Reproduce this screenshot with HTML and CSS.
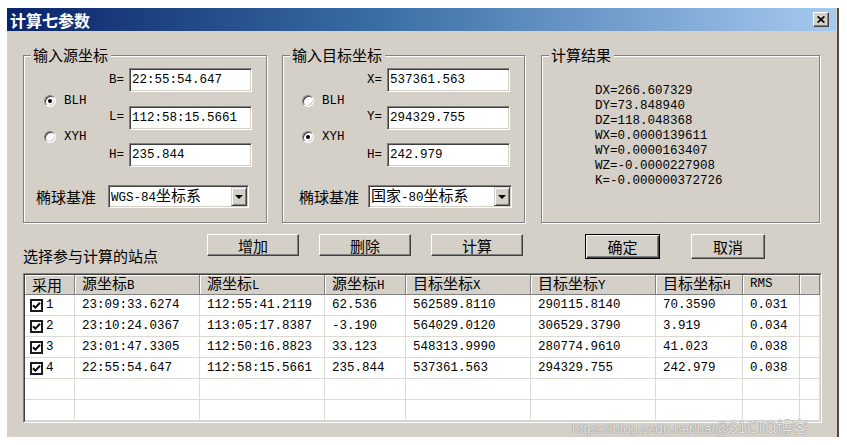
FILE: index.html
```html
<!DOCTYPE html>
<html lang="zh-CN">
<head>
<meta charset="utf-8">
<title>计算七参数</title>
<link rel="stylesheet" href="styles.css">
</head>
<body>
<div class="win">
  <div class="titlebar">
    <span class="title">计算七参数</span>
    <span class="close"><svg width="8" height="7" viewBox="0 0 8 7"><path d="M0.6 0.4 L7.4 6.6 M7.4 0.4 L0.6 6.6" stroke="#000" stroke-width="1.7" fill="none"/></svg></span>
  </div>
  <div class="body">
    <div class="groups">
      <div class="group g1">
        <span class="legend">输入源坐标</span>
        <div class="coord">
          <div class="radios">
            <div class="radio"><span class="dot on"></span><span class="m">BLH</span></div>
            <div class="radio"><span class="dot"></span><span class="m">XYH</span></div>
          </div>
          <div class="fields">
            <div class="field"><span class="m lbl">B=</span><span class="input m">22:55:54.647</span></div>
            <div class="field"><span class="m lbl">L=</span><span class="input m">112:58:15.5661</span></div>
            <div class="field"><span class="m lbl">H=</span><span class="input m">235.844</span></div>
          </div>
        </div>
        <div class="ellip">
          <span class="elabel">椭球基准</span>
          <div class="combo"><span class="cval"><span class="m">WGS-84</span>坐标系</span><span class="arrow"><span class="tri"></span></span></div>
        </div>
      </div>
      <div class="group g2">
        <span class="legend">输入目标坐标</span>
        <div class="coord">
          <div class="radios">
            <div class="radio"><span class="dot"></span><span class="m">BLH</span></div>
            <div class="radio"><span class="dot on"></span><span class="m">XYH</span></div>
          </div>
          <div class="fields">
            <div class="field"><span class="m lbl">X=</span><span class="input m">537361.563</span></div>
            <div class="field"><span class="m lbl">Y=</span><span class="input m">294329.755</span></div>
            <div class="field"><span class="m lbl">H=</span><span class="input m">242.979</span></div>
          </div>
        </div>
        <div class="ellip">
          <span class="elabel">椭球基准</span>
          <div class="combo"><span class="cval">国家<span class="m">-80</span>坐标系</span><span class="arrow"><span class="tri"></span></span></div>
        </div>
      </div>
      <div class="group g3">
        <span class="legend">计算结果</span>
        <div class="result m">DX=266.607329
DY=73.848940
DZ=118.048368
WX=0.0000139611
WY=0.0000163407
WZ=-0.0000227908
K=-0.000000372726</div>
      </div>
    </div>

    <div class="actions">
      <span class="sel-label">选择参与计算的站点</span>
      <span class="btn b-add">增加</span>
      <span class="btn b-del">删除</span>
      <span class="btn b-calc">计算</span>
      <span class="btn big default b-ok">确定</span>
      <span class="btn big b-cancel">取消</span>
    </div>

    <div class="table">
      <div class="grid">
        <div class="th"><span>采用</span></div>
        <div class="th"><span>源坐标<span class="m">B</span></span></div>
        <div class="th"><span>源坐标<span class="m">L</span></span></div>
        <div class="th"><span>源坐标<span class="m">H</span></span></div>
        <div class="th"><span>目标坐标<span class="m">X</span></span></div>
        <div class="th"><span>目标坐标<span class="m">Y</span></span></div>
        <div class="th"><span>目标坐标<span class="m">H</span></span></div>
        <div class="th"><span class="m">RMS</span></div>
        <div class="th"></div>

        <div class="td c1"><span class="chk"><svg width="9" height="9" viewBox="0 0 9 9"><path d="M1 4.2 L3.4 6.6 L8 1.8" stroke="#000" stroke-width="2" fill="none"/></svg></span><span class="m">1</span></div>
        <div class="td m">23:09:33.6274</div>
        <div class="td m">112:55:41.2119</div>
        <div class="td m">62.536</div>
        <div class="td m">562589.8110</div>
        <div class="td m">290115.8140</div>
        <div class="td m">70.3590</div>
        <div class="td m">0.031</div>
        <div class="td"></div>

        <div class="td c1"><span class="chk"><svg width="9" height="9" viewBox="0 0 9 9"><path d="M1 4.2 L3.4 6.6 L8 1.8" stroke="#000" stroke-width="2" fill="none"/></svg></span><span class="m">2</span></div>
        <div class="td m">23:10:24.0367</div>
        <div class="td m">113:05:17.8387</div>
        <div class="td m">-3.190</div>
        <div class="td m">564029.0120</div>
        <div class="td m">306529.3790</div>
        <div class="td m">3.919</div>
        <div class="td m">0.034</div>
        <div class="td"></div>

        <div class="td c1"><span class="chk"><svg width="9" height="9" viewBox="0 0 9 9"><path d="M1 4.2 L3.4 6.6 L8 1.8" stroke="#000" stroke-width="2" fill="none"/></svg></span><span class="m">3</span></div>
        <div class="td m">23:01:47.3305</div>
        <div class="td m">112:50:16.8823</div>
        <div class="td m">33.123</div>
        <div class="td m">548313.9990</div>
        <div class="td m">280774.9610</div>
        <div class="td m">41.023</div>
        <div class="td m">0.038</div>
        <div class="td"></div>

        <div class="td c1"><span class="chk"><svg width="9" height="9" viewBox="0 0 9 9"><path d="M1 4.2 L3.4 6.6 L8 1.8" stroke="#000" stroke-width="2" fill="none"/></svg></span><span class="m">4</span></div>
        <div class="td m">22:55:54.647</div>
        <div class="td m">112:58:15.5661</div>
        <div class="td m">235.844</div>
        <div class="td m">537361.563</div>
        <div class="td m">294329.755</div>
        <div class="td m">242.979</div>
        <div class="td m">0.038</div>
        <div class="td"></div>

        <div class="td"></div><div class="td"></div><div class="td"></div><div class="td"></div><div class="td"></div><div class="td"></div><div class="td"></div><div class="td"></div><div class="td"></div>
        <div class="td"></div><div class="td"></div><div class="td"></div><div class="td"></div><div class="td"></div><div class="td"></div><div class="td"></div><div class="td"></div><div class="td"></div>
      </div>
    </div>
  </div>
</div>
<div class="watermark"><span class="wm-url">https://blog.csdn.net/bai</span><span class="wm-brand">@51CTO博客</span></div>
</body>
</html>
```

FILE: styles.css
```css
* { box-sizing: border-box; }

body {
  margin: 0;
  background: #fff;
  font-family: "Noto Sans CJK SC", sans-serif;
  font-size: 15px;
  line-height: 15px;
  color: #000;
}

.m {
  font-family: "Liberation Mono", "DejaVu Sans Mono", monospace;
  font-size: 12.5px;
}

.win {
  margin: 8px 0 0 7px;
  width: 832px;
  height: 429px;
  background: #d4d0c8;
  border-right: 2px solid #4a4a4a;
  display: flex;
  flex-direction: column;
}

.titlebar {
  height: 23px;
  margin-right: 1px;
  background: linear-gradient(90deg, #0a246a 0%, #3a6ea5 45%, #a6caf0 100%);
  display: flex;
  align-items: center;
  justify-content: space-between;
  padding: 0 7px 0 3px;
}

.title {
  color: #fff;
  font-weight: bold;
  font-size: 16px;
  line-height: 16px;
}

.close {
  width: 16px;
  height: 15px;
  background: #d4d0c8;
  border: 1px solid;
  border-color: #fff #404040 #404040 #fff;
  box-shadow: inset -1px -1px #808080;
  display: flex;
  align-items: center;
  justify-content: center;
  padding-bottom: 1px;
}

.body {
  padding: 24px 0 0 16px;
}

.groups {
  display: flex;
  height: 168px;
}

.group {
  position: relative;
  border: 1px solid #808080;
  box-shadow: inset 1px 1px #fff, 1px 1px #fff;
}

.g1 { width: 244px; }
.g2 { width: 243px; margin-left: 15px; }
.g3 { width: 279px; margin-left: 16px; }

.legend {
  position: absolute;
  top: -9px;
  left: 7px;
  padding: 0 3px 0 2px;
  background: #d4d0c8;
  white-space: nowrap;
}

.coord {
  display: flex;
  align-items: center;
  padding: 12px 14px 0 20px;
}

.g2 .coord { padding: 12px 14px 0 19px; }

.radios {
  display: flex;
  flex-direction: column;
  gap: 20px;
  margin-top: 3px;
}

.radio {
  display: flex;
  align-items: center;
  height: 16px;
}

.dot {
  position: relative;
  width: 12px;
  height: 12px;
  border-radius: 50%;
  background: #fff;
  border: 1px solid;
  border-color: #808080 #fff #fff #808080;
  box-shadow: inset 1px 1px #404040, inset -1px -1px #d4d0c8;
  margin-right: 8px;
}

.dot.on::after {
  content: "";
  position: absolute;
  left: 3px;
  top: 3px;
  width: 4px;
  height: 4px;
  border-radius: 50%;
  background: #000;
}

.fields {
  margin-left: auto;
  display: flex;
  flex-direction: column;
  gap: 13.5px;
}

.field {
  display: flex;
  align-items: center;
}

.lbl { margin-right: 5px; }

.input {
  width: 123px;
  height: 24px;
  background: #fff;
  border: 1px solid;
  border-color: #808080 #fff #fff #808080;
  box-shadow: inset 1px 1px #404040, inset -1px -1px #d4d0c8;
  display: flex;
  align-items: center;
  padding-left: 2px;
  padding-top: 1px;
}

.ellip {
  display: flex;
  align-items: center;
  margin-top: 18px;
  padding-left: 12px;
}

.g2 .ellip { padding-left: 16px; }

.elabel { margin-right: 12px; }
.g2 .elabel { margin-right: 9px; }

.combo {
  width: 141px;
  height: 23px;
  background: #fff;
  border: 1px solid;
  border-color: #808080 #fff #fff #808080;
  box-shadow: inset 1px 1px #404040, inset -1px -1px #d4d0c8;
  display: flex;
  align-items: center;
  padding: 1px 1px 1px 2px;
}

.g2 .combo { width: 144px; }

.cval {
  flex: 1;
  white-space: nowrap;
}

.arrow {
  width: 16px;
  height: 19px;
  background: #d4d0c8;
  border: 1px solid;
  border-color: #d4d0c8 #404040 #404040 #d4d0c8;
  box-shadow: inset 1px 1px #fff, inset -1px -1px #808080;
  display: flex;
  align-items: center;
  justify-content: center;
}

.tri {
  width: 0;
  height: 0;
  border-left: 4px solid transparent;
  border-right: 4px solid transparent;
  border-top: 4px solid #000;
}

.result {
  padding: 28px 0 0 53px;
  line-height: 15px;
  white-space: pre;
}

.actions {
  display: flex;
  align-items: flex-start;
  height: 39px;
  margin-top: 11px;
}

.sel-label {
  width: 184px;
  margin-top: 14px;
  white-space: nowrap;
}

.btn {
  width: 92px;
  height: 22px;
  background: #d4d0c8;
  border: 1px solid;
  border-color: #fff #404040 #404040 #fff;
  box-shadow: inset -1px -1px #808080;
  display: flex;
  align-items: center;
  justify-content: center;
}

.b-del, .b-calc { margin-left: 20px; }

.big { height: 25px; }

.b-ok {
  width: 75px;
  margin-left: 62px;
}

.default {
  border: 1px solid #000;
  box-shadow: inset 1px 1px #fff, inset -1px -1px #404040, inset -2px -2px #808080;
}

.b-cancel {
  width: 74px;
  margin-left: 31px;
}

.table {
  width: 799px;
  height: 150px;
  border: 1px solid;
  border-color: #808080 #fff #fff #808080;
}

.grid {
  height: 100%;
  border: 1px solid;
  border-color: #404040 #d4d0c8 #d4d0c8 #404040;
  background: #fff;
  display: grid;
  grid-template-columns: 50px 125px 125px 81px 125px 125px 87px 57px 1fr;
  grid-template-rows: 20px repeat(6, 21px);
}

.th {
  background: #d4d0c8;
  border-right: 1px solid #808080;
  border-bottom: 1px solid #808080;
  box-shadow: inset 1px 1px #fff;
  display: flex;
  align-items: center;
  padding-left: 7px;
  white-space: nowrap;
}

.td {
  border-right: 1px solid #dcdad4;
  border-bottom: 1px solid #dcdad4;
  display: flex;
  align-items: center;
  padding-left: 7px;
  white-space: nowrap;
}

.td.c1 { padding-left: 5px; }

.chk {
  width: 13px;
  height: 13px;
  border: 2px solid #1c1c1c;
  background: #fff;
  display: flex;
  align-items: center;
  justify-content: center;
  margin-right: 3px;
}

.watermark {
  position: absolute;
  left: 572px;
  top: 419px;
  display: flex;
  align-items: baseline;
  color: rgba(240, 240, 240, 0.9);
  text-shadow: 0 0 1px #8a8a8a, 0 0 1px #8a8a8a;
  font-family: "Liberation Sans", sans-serif;
  white-space: nowrap;
}

.wm-url { font-size: 13.5px; }

.wm-brand {
  font-family: "Noto Sans CJK SC", sans-serif;
  font-size: 15.5px;
}
```
